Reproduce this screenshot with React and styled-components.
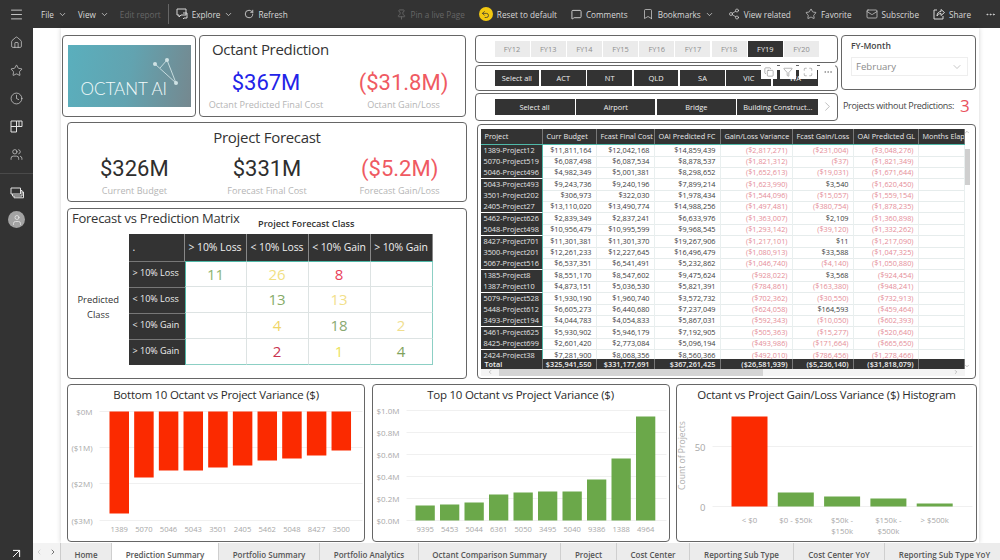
import React from 'react';
import styled, { createGlobalStyle } from 'styled-components';
import {
  Menu, Home, Star, Clock, Users, ChevronDown, ChevronRight, ChevronLeft, ChevronUp, RotateCw, Pin, MessageSquare,
  Bookmark, Share2, Mail, Copy, Filter, Maximize, MoreHorizontal, Undo2, ArrowUpRight, User,
} from 'lucide-react';

const GlobalStyle = createGlobalStyle`
  html, body { margin: 0; padding: 0; background: #fff; }
  body { font-family: "Open Sans", "Noto Sans", sans-serif; color: #333; }
  * { box-sizing: border-box; }
`;

const Shell = styled.div`
  width: 1000px;
  height: 560px;
  display: flex;
  overflow: hidden;
  background: #fff;
`;

const Rail = styled.nav`
  width: 33px;
  flex: none;
  background: #333;
  color: #e4e4e4;
  display: flex;
  flex-direction: column;
  align-items: center;
`;

const RailIcon = styled.div`
  height: 28px;
  display: flex;
  align-items: center;
  justify-content: center;
`;

const RailLine = styled.div`
  width: 100%;
  height: 1px;
  background: #4a4a4a;
  margin: 5px 0;
`;

const Avatar = styled.div`
  width: 17px;
  height: 17px;
  margin-top: 4px;
  border-radius: 50%;
  background: #a3a3a3;
  color: #e8e8e8;
  display: flex;
  align-items: center;
  justify-content: center;
`;

const RailFoot = styled.div`
  margin-top: auto;
  height: 14px;
  display: flex;
  align-items: center;
  color: #fff;
`;

const Main = styled.div`
  flex: 1;
  min-width: 0;
  display: flex;
  flex-direction: column;
`;

const Toolbar = styled.header`
  height: 28px;
  flex: none;
  background: #333;
  color: #d8d8d8;
  font-size: 8.2px;
  display: flex;
  align-items: center;
  justify-content: space-between;
  padding: 0 4px 0 8px;
`;

const ToolGroup = styled.div`
  display: flex;
  align-items: center;
  gap: ${({ $gap }) => $gap}px;
`;

const ToolItem = styled.span`
  display: flex;
  align-items: center;
  gap: 4px;
  white-space: nowrap;
  color: ${({ $dim }) => ($dim ? '#666' : '#d8d8d8')};
`;

const ToolDivider = styled.span`
  width: 1px;
  height: 20px;
  margin: 0 -4px;
  background: #666;
`;

const ResetBadge = styled.span`
  width: 14px;
  height: 14px;
  border-radius: 50%;
  background: #f2c811;
  color: #333;
  display: flex;
  align-items: center;
  justify-content: center;
`;

const Stage = styled.div`
  flex: 1;
  min-height: 0;
  padding-left: 28px;
`;

const Page = styled.main`
  width: 918px;
  height: 515px;
  padding: 7px 0 0 1px;
  background: #fff;
  box-shadow: 0 0 5px rgba(0, 0, 0, 0.18);
  display: flex;
  flex-direction: column;
  gap: 5px;
`;

const TopArea = styled.div`
  display: flex;
  gap: 7px;
  height: 344px;
`;

const LeftColumn = styled.div`
  width: 406px;
  flex: none;
  display: flex;
  flex-direction: column;
`;

const RightColumn = styled.div`
  width: 501px;
  flex: none;
  display: flex;
  flex-direction: column;
`;

const Card = styled.section`
  border: 1.5px solid #666;
  border-radius: 4px;
  background: #fff;
`;

const HeadRow = styled.div`
  display: flex;
  gap: 3px;
  height: 82px;
`;

const LogoCard = styled(Card)`
  width: 134px;
  padding: 8.5px 4.5px;
`;

const Logo = styled.div`
  position: relative;
  width: 123px;
  height: 62px;
  background: linear-gradient(100deg, #5aafbd 0%, #62a3b0 50%, #75888f 100%);
  display: flex;
  align-items: flex-end;
  padding: 0 0 8px 13px;
  color: #f4fbfb;
  font-family: Lato, "Open Sans", sans-serif;
  font-weight: 300;
  font-size: 17px;
  line-height: 20px;
`;

const LogoMark = styled.svg`
  position: absolute;
  left: 0;
  top: 0;
`;

const PredictionCard = styled(Card)`
  width: 267px;
  padding-top: 3px;
`;

const ForecastCard = styled(Card)`
  width: 400px;
  height: 80px;
  margin: 5px 0 0 5px;
  padding-top: 4px;
`;

const KpiTitle = styled.h2`
  margin: 0;
  font-size: 15px;
  letter-spacing: -0.3px;
  line-height: 20px;
  font-weight: 400;
  color: #333;
  text-align: ${({ $center }) => ($center ? 'center' : 'left')};
  padding-left: ${({ $center }) => ($center ? 0 : 12)}px;
`;

const KpiRow = styled.div`
  display: grid;
  grid-template-columns: ${({ $cols }) => $cols};
  column-gap: ${({ $gap }) => $gap || 0}px;
  margin-top: ${({ $top }) => $top}px;
`;

const Kpi = styled.div`
  text-align: center;
`;

const KpiValue = styled.div`
  font-family: Roboto, "Liberation Sans", sans-serif;
  font-size: 22px;
  line-height: 30px;
  color: ${({ $tone }) => ({ blue: '#2323e8', red: '#ef5a62', dark: '#2e2e2e' }[$tone])};
`;

const KpiLabel = styled.div`
  font-size: 9.1px;
  line-height: 14px;
  color: #b5b5b5;
  white-space: nowrap;
`;

const MatrixCard = styled(Card)`
  width: 400px;
  height: 171px;
  margin: 6px 0 0 5px;
  padding: 0 0 0 4px;
`;

const MatrixHead = styled.div`
  display: flex;
  height: 24.5px;
`;

const MatrixTitle = styled.h2`
  margin: 0;
  width: 186px;
  font-size: 13px;
  letter-spacing: -0.25px;
  line-height: 18px;
  font-weight: 400;
  color: #333;
  white-space: nowrap;
`;

const ClassTitle = styled.div`
  font-size: 9.2px;
  font-weight: 600;
  color: #333;
  padding-top: 8px;
  line-height: 13px;
  white-space: nowrap;
`;

const MatrixBody = styled.div`
  display: flex;
`;

const SideLabel = styled.div`
  width: 56.5px;
  flex: none;
  padding: 58px 4px 0 0;
  text-align: center;
  font-size: 9.4px;
  line-height: 15px;
  color: #333;
`;

const MatrixGrid = styled.div`
  display: grid;
  grid-template-columns: 56px repeat(4, 62px);
  grid-template-rows: 27px repeat(4, 26px);
  width: 304px;
`;

const MatrixColHead = styled.div`
  background: #333;
  color: #f0f0f0;
  font-size: 10.4px;
  letter-spacing: -0.05px;
  display: flex;
  align-items: center;
  justify-content: ${({ $left }) => ($left ? 'flex-start' : 'center')};
  padding-left: ${({ $left }) => ($left ? 4 : 0)}px;
  border-right: 1px solid #888;
  white-space: nowrap;
`;

const MatrixRowHead = styled.div`
  background: #333;
  color: #eee;
  font-size: 9px;
  padding: 4px 0 0 4px;
  border-top: 1px solid #777;
  white-space: nowrap;
`;

const MatrixCell = styled.div`
  display: flex;
  align-items: center;
  justify-content: center;
  font-size: 15px;
  color: ${({ $c }) => $c};
  border-right: 1px solid ${({ $end }) => ($end ? '#8ccfc4' : '#dde3e3')};
  border-bottom: 1px solid ${({ $last }) => ($last ? '#8ccfc4' : '#dde3e3')};
  border-left: ${({ $first }) => ($first ? '1px solid #4fb8a8' : '0')};
  border-top: ${({ $top }) => ($top ? '1px solid #4fb8a8' : '0')};
`;

const SlicerCard = styled(Card)`
  width: 363px;
  height: ${({ $h }) => $h}px;
  margin-top: ${({ $top }) => $top || 0}px;
  padding-left: 18.5px;
  display: flex;
  align-items: center;
  gap: ${({ $gap }) => $gap}px;
  position: relative;
`;

const SlicerTop = styled.div`
  display: flex;
  gap: 3px;
`;

const SlicerStack = styled.div`
  width: 363px;
  flex: none;
`;

const SlicerButton = styled.span`
  width: ${({ $w }) => $w}px;
  height: 16px;
  flex: none;
  background: ${({ $dark }) => ($dark ? '#333' : '#ebebeb')};
  color: ${({ $dark }) => ($dark ? '#efefef' : '#8d8d8d')};
  font-size: 7.4px;
  display: flex;
  align-items: center;
  justify-content: center;
  white-space: nowrap;
`;

const VisualHeader = styled.div`
  position: absolute;
  right: 2px;
  top: -2px;
  display: flex;
  align-items: flex-start;
  gap: 3px;
`;

const VisualButton = styled.span`
  width: ${({ $w }) => $w || 16}px;
  height: 15px;
  background: #fff;
  color: #6f6f6f;
  display: flex;
  align-items: center;
  justify-content: center;
`;

const SlicerArrow = styled.span`
  position: absolute;
  right: 2px;
  top: 5px;
  color: #999;
  display: flex;
`;

const SideStack = styled.div`
  flex: 1;
  min-width: 0;
`;

const MonthCard = styled(Card)`
  height: 55px;
  padding: 4px 7px 0 9px;
`;

const MonthLabel = styled.div`
  font-size: 8.6px;
  font-weight: 600;
  line-height: 13px;
  color: #444;
`;

const MonthSelect = styled.div`
  margin-top: 4px;
  height: 19px;
  border: 1px solid #eee;
  padding: 0 4px 0 4px;
  display: flex;
  align-items: center;
  justify-content: space-between;
  color: #8c8c8c;
  font-size: 9.6px;
`;

const MissingLine = styled.div`
  height: 30px;
  padding-left: 2px;
  display: flex;
  align-items: center;
  gap: 6px;
  font-size: 9px;
  letter-spacing: -0.3px;
  color: #444;
  white-space: nowrap;
`;

const MissingCount = styled.span`
  font-size: 17px;
  color: #e9525c;
`;

const TableCard = styled(Card)`
  width: 499px;
  height: 255px;
  margin: 3px 0 0 2px;
  padding: 3.5px 4px 0 2.5px;
  display: flex;
`;

const TableArea = styled.div`
  width: 484px;
  flex: none;
  display: flex;
  flex-direction: column;
`;

const Row = styled.div`
  display: grid;
  grid-template-columns: 62px 54px 58px 66px 72px 61px 65px 46px;
  font-size: 7.3px;
`;

const HeadRowCells = styled(Row)`
  height: 16px;
  background: #333;
  border-bottom: 1px solid #4fb8a8;
`;

const HeadCell = styled.div`
  color: #e8e8e8;
  padding: 2px 0 0 4px;
  line-height: 10px;
  border-right: 1px solid #777;
  white-space: nowrap;
  overflow: hidden;
`;

const TableRows = styled.div`
  height: 214px;
  overflow: hidden;
`;

const BodyRow = styled(Row)`
  height: 11.4px;
  line-height: 11px;
`;

const NameCell = styled.div`
  background: #333;
  color: #e4e4e4;
  padding-left: 3px;
  border-bottom: 1px solid #fff;
  border-right: 1px solid #4fb8a8;
  white-space: nowrap;
`;

const ValueCell = styled.div`
  text-align: right;
  padding-right: 4px;
  white-space: nowrap;
  color: ${({ $neg }) => ($neg ? '#e58d98' : '#3c3c3c')};
  border-bottom: 1px solid #e6ecec;
  border-right: 1px solid #e9efef;
`;

const TotalRow = styled(Row)`
  height: 10px;
  line-height: 10px;
  background: #333;
  color: #f0f0f0;
  font-weight: 600;
`;

const TotalCell = styled.div`
  text-align: ${({ $left }) => ($left ? 'left' : 'right')};
  padding: ${({ $left }) => ($left ? '0 0 0 4px' : '0 4px 0 0')};
  border-right: 1px solid #777;
  white-space: nowrap;
`;

const HScroll = styled.div`
  height: 7px;
  background: #f4f4f4;
  color: #888;
  display: flex;
  align-items: center;
  justify-content: space-between;
  padding: 0 6px;
  position: relative;
`;

const HThumb = styled.div`
  position: absolute;
  left: 18px;
  top: 0;
  bottom: 0;
  width: 264px;
  background: #d4d4d4;
`;

const VScroll = styled.div`
  width: 5px;
  flex: none;
  height: 240px;
  color: #888;
  display: flex;
  flex-direction: column;
  align-items: center;
  justify-content: space-between;
  position: relative;
`;

const VThumb = styled.div`
  position: absolute;
  top: 20px;
  left: 0;
  right: 0;
  height: 36px;
  background: #cfcfcf;
`;

const ChartRow = styled.div`
  display: flex;
  padding-left: 5px;
  gap: 6.5px;
  height: 158px;
`;

const ChartCard = styled(Card)`
  width: ${({ $w }) => $w}px;
  flex: none;
  overflow: hidden;
`;

const ChartTitle = styled.h3`
  margin: 0;
  height: 19px;
  font-size: 11.5px;
  letter-spacing: -0.25px;
  line-height: 19px;
  font-weight: 400;
  color: #2b2b2b;
  text-align: center;
  white-space: nowrap;
`;

const ChartSvg = styled.svg`
  display: block;
  font-family: "Open Sans", sans-serif;
`;

const TabBar = styled.footer`
  height: 17px;
  flex: none;
  display: flex;
  background: #ececec;
  overflow: hidden;
`;

const TabArrows = styled.div`
  width: 28px;
  flex: none;
  background: #f3f3f3;
  display: flex;
  align-items: center;
  justify-content: space-between;
  padding: 0 3px 0 2px;
  color: #333;
  border-right: 1px solid #ccc;
`;

const Tab = styled.span`
  width: ${({ $w }) => $w}px;
  flex: none;
  font-size: 8px;
  font-weight: 600;
  line-height: 23px;
  text-align: center;
  white-space: nowrap;
  color: #555;
  background: ${({ $active }) => ($active ? '#fff' : '#ececec')};
  border-right: 1px solid #cfcfcf;
`;

const AppsIcon = () => (
  <svg width="13" height="13" viewBox="0 0 13 13" fill="none" stroke="currentColor" strokeWidth="1">
    <path d="M1 1h5.500v11H1zM1 6.500h5.500M6.500 1H12v5.500H6.500zM9 1v5.500" />
  </svg>
);

const PeopleIcon = () => <Users size={13} strokeWidth={1.2} />;

const WorkspaceIcon = () => (
  <svg width="14" height="12" viewBox="0 0 14 12" fill="none" stroke="currentColor" strokeWidth="1">
    <path d="M1 1h9.500v6H1zM2.500 7v2H12V3.500h-1.500M4 9v1.800h9.500V5H12" />
  </svg>
);

const ExploreIcon = () => (
  <svg width="12" height="12" viewBox="0 0 12 12" fill="none" stroke="currentColor" strokeWidth="1">
    <path d="M1 1h9v6H5L3 9V7H1zM7 5h4v5H8l-1 1" />
  </svg>
);

const LogoGlyph = () => (
  <LogoMark width="123" height="62" viewBox="0 0 123 62" fill="none" stroke="#cfe2e4" strokeWidth="0.9">
    <path d="M87 19L108 38M99 15L108 38M99 15L92 23" />
    <g fill="#cfe2e4" stroke="none">
      <circle cx="87" cy="19" r="2" />
      <circle cx="99" cy="15" r="2" />
      <circle cx="108" cy="38" r="2" />
    </g>
  </LogoMark>
);

const yearButtons = ['FY12', 'FY13', 'FY14', 'FY15', 'FY16', 'FY17', 'FY18', 'FY19', 'FY20'];
const stateButtons = ['Select all', 'ACT', 'NT', 'QLD', 'SA', 'VIC', 'WA'];
const typeButtons = ['Select all', 'Airport', 'Bridge', 'Building Construct...'];

const matrixHeads = ['> 10% Loss', '< 10% Loss', '< 10% Gain', '> 10% Gain'];
const matrixRows = [
  [['11', '#8fb56f'], ['26', '#f1df83'], ['8', '#e9405a'], null],
  [null, ['13', '#86ab68'], ['13', '#f2e08a'], null],
  [null, ['4', '#efd566'], ['18', '#8aa971'], ['2', '#f0de8e']],
  [null, ['2', '#c9324e'], ['1', '#ece25a'], ['4', '#7fa35c']],
];

const tableHeads = ['Project', 'Curr Budget', 'Fcast Final Cost', 'OAI Predicted FC', 'Gain/Loss Variance', 'Fcast Gain/Loss', 'OAI Predicted GL', 'Months Elapsed'];

const tableRows = [
  ['1389-Project12', '$11,811,164', '$12,042,168', '$14,859,439', '($2,817,271)', '($231,004)', '($3,048,276)'],
  ['5070-Project519', '$6,087,498', '$6,087,534', '$8,878,537', '($1,821,312)', '($37)', '($1,821,349)'],
  ['5046-Project496', '$4,982,349', '$5,001,381', '$8,298,652', '($1,652,613)', '($19,031)', '($1,671,644)'],
  ['5043-Project493', '$9,243,736', '$9,240,196', '$7,899,214', '($1,623,990)', '$3,540', '($1,620,450)'],
  ['3501-Project202', '$306,973', '$322,030', '$1,978,434', '($1,544,096)', '($15,057)', '($1,559,154)'],
  ['2405-Project27', '$13,110,020', '$13,490,774', '$14,988,256', '($1,497,481)', '($380,754)', '($1,878,235)'],
  ['5462-Project626', '$2,839,349', '$2,837,241', '$6,633,976', '($1,363,007)', '$2,109', '($1,360,898)'],
  ['5048-Project498', '$10,956,479', '$10,995,599', '$9,968,545', '($1,293,142)', '($39,120)', '($1,332,262)'],
  ['8427-Project701', '$11,301,381', '$11,301,370', '$19,267,906', '($1,217,101)', '$11', '($1,217,090)'],
  ['3500-Project201', '$12,261,233', '$12,227,645', '$16,496,479', '($1,080,913)', '$33,588', '($1,047,325)'],
  ['5067-Project516', '$6,537,351', '$6,541,491', '$5,232,862', '($1,046,740)', '($4,140)', '($1,050,880)'],
  ['1385-Project8', '$8,551,170', '$8,547,602', '$9,475,624', '($928,022)', '$3,568', '($924,454)'],
  ['1387-Project10', '$4,873,151', '$5,036,530', '$5,821,391', '($784,861)', '($163,380)', '($948,241)'],
  ['5079-Project528', '$1,930,190', '$1,960,740', '$3,572,732', '($702,362)', '($30,550)', '($732,913)'],
  ['5448-Project612', '$6,605,273', '$6,440,680', '$7,237,049', '($624,058)', '$164,593', '($459,464)'],
  ['3493-Project194', '$4,044,783', '$4,054,833', '$5,867,031', '($592,343)', '($10,050)', '($602,393)'],
  ['5461-Project625', '$5,930,902', '$5,946,179', '$7,192,905', '($505,363)', '($15,277)', '($520,640)'],
  ['8425-Project699', '$2,601,420', '$2,773,084', '$5,096,194', '($493,986)', '($171,664)', '($665,650)'],
  ['2424-Project38', '$7,281,900', '$8,068,356', '$8,560,366', '($492,010)', '($786,456)', '($1,278,466)'],
];

const totals = ['Total', '$325,941,550', '$331,177,691', '$367,261,425', '($26,581,939)', '($5,236,140)', '($31,818,079)', ''];

const tabs = [
  ['Home', 51], ['Prediction Summary', 107], ['Portfolio Summary', 101], ['Portfolio Analytics', 99],
  ['Octant Comparison Summary', 142], ['Project', 56], ['Cost Center', 73], ['Reporting Sub Type', 104],
  ['Cost Center YoY', 91], ['Reporting Sub Type YoY', 120],
];

const bottomIds = ['1389', '5070', '5046', '5043', '3501', '2405', '5462', '5048', '8427', '3500'];
const bottomEnds = [514, 478, 471, 471, 468, 466, 461, 459, 456, 451];
const topIds = ['9395', '5453', '5044', '6361', '5050', '3495', '5040', '9386', '1388', '4964'];
const topStarts = [506, 505, 503, 495, 493, 492, 492, 480, 459, 417];

const AxisLine = ({ y, x1, x2 }) => <line x1={x1} x2={x2} y1={y} y2={y} stroke="#f0f0f0" strokeWidth="1" />;

const AxisText = ({ x, y, anchor = 'end', size = 8, children }) => (
  <text x={x} y={y} textAnchor={anchor} fontSize={size} fill="#a8a8a8">{children}</text>
);

const BottomChart = () => (
  <ChartSvg width="295" height="137" viewBox="68.5 404.5 295 137">
    {[412, 448, 484, 521].map((y) => <AxisLine key={y} y={y} x1={100} x2={363} />)}
    {['$0M', '($1M)', '($2M)', '($3M)'].map((t, i) => <AxisText key={t} x={93} y={[415, 451, 487, 524][i]}>{t}</AxisText>)}
    {bottomEnds.map((end, i) => (
      <rect key={bottomIds[i]} x={110 + i * 24.67} y={412} width={19.5} height={end - 412} fill="#fb2a00" />
    ))}
    {bottomIds.map((id, i) => <AxisText key={id} x={119.7 + i * 24.67} y={532} anchor="middle" size={7.6}>{id}</AxisText>)}
  </ChartSvg>
);

const TopChart = () => (
  <ChartSvg width="295" height="137" viewBox="373.5 404.5 295 137">
    {[411, 433, 455, 477, 499, 521].map((y) => <AxisLine key={y} y={y} x1={407} x2={667} />)}
    {['$1.0M', '$0.8M', '$0.6M', '$0.4M', '$0.2M', '$0.0M'].map((t, i) => <AxisText key={t} x={400} y={414 + i * 22}>{t}</AxisText>)}
    {topStarts.map((top, i) => (
      <rect key={topIds[i]} x={416 + i * 24.5} y={top} width={19.3} height={521 - top} fill="#6ba84a" />
    ))}
    {topIds.map((id, i) => <AxisText key={id} x={425.7 + i * 24.5} y={532} anchor="middle" size={7.6}>{id}</AxisText>)}
  </ChartSvg>
);

const histBars = [
  { top: 417, fill: '#fb2a00', lines: ['< $0'] },
  { top: 493, fill: '#6ba84a', lines: ['$0 - $50k'] },
  { top: 497, fill: '#6ba84a', lines: ['$50k -', '$150k'] },
  { top: 499, fill: '#6ba84a', lines: ['$150k -', '$500k'] },
  { top: 504, fill: '#6ba84a', lines: ['> $500k'] },
];

const Histogram = () => (
  <ChartSvg width="298" height="137" viewBox="677.5 404.5 298 137">
    <AxisLine y={447} x1={713} x2={973} />
    <AxisLine y={507} x1={713} x2={973} />
    <AxisText x={706} y={451} size={9.5}>50</AxisText>
    <AxisText x={706} y={511} size={9.5}>0</AxisText>
    <text x={688} y={459} transform="rotate(-90 685 459)" textAnchor="middle" fontSize="8.6" fill="#b0b0b0">Count of Projects</text>
    {histBars.map((bar, i) => (
      <g key={bar.lines[0]}>
        <rect x={732 + i * 46.3} y={bar.top} width={36} height={507 - bar.top} fill={bar.fill} />
        {bar.lines.map((line, n) => (
          <AxisText key={line} x={750 + i * 46.3} y={523 + n * 11} anchor="middle" size={7.8}>{line}</AxisText>
        ))}
      </g>
    ))}
  </ChartSvg>
);

const isNeg = (v) => v.startsWith('(');

export default function App() {
  return (
    <Shell>
      <GlobalStyle />
      <Rail>
        <RailIcon><Menu size={15} strokeWidth={1.3} /></RailIcon>
        <RailIcon><Home size={13} strokeWidth={1.2} /></RailIcon>
        <RailIcon><Star size={13} strokeWidth={1.2} /></RailIcon>
        <RailIcon><Clock size={13} strokeWidth={1.2} /></RailIcon>
        <RailIcon><AppsIcon /></RailIcon>
        <RailIcon><PeopleIcon /></RailIcon>
        <RailLine />
        <RailIcon><WorkspaceIcon /></RailIcon>
        <Avatar><User size={12} strokeWidth={1.6} /></Avatar>
        <RailFoot><ArrowUpRight size={15} strokeWidth={1.6} /></RailFoot>
      </Rail>
      <Main>
        <Toolbar>
          <ToolGroup $gap={11}>
            <ToolItem>File <ChevronDown size={9} /></ToolItem>
            <ToolItem>View <ChevronDown size={9} /></ToolItem>
            <ToolItem $dim>Edit report</ToolItem>
            <ToolDivider />
            <ToolItem><ExploreIcon /> Explore <ChevronDown size={9} /></ToolItem>
            <ToolItem><RotateCw size={10} /> Refresh</ToolItem>
          </ToolGroup>
          <ToolGroup $gap={14}>
            <ToolItem $dim><Pin size={11} /> Pin a live Page</ToolItem>
            <ToolItem><ResetBadge><Undo2 size={9} /></ResetBadge> Reset to default</ToolItem>
            <ToolItem><MessageSquare size={11} /> Comments</ToolItem>
            <ToolItem><Bookmark size={12} strokeWidth={1.4} /> Bookmarks <ChevronDown size={9} /></ToolItem>
            <ToolItem><Share2 size={12} strokeWidth={1.4} /> View related</ToolItem>
            <ToolItem><Star size={12} strokeWidth={1.4} /> Favorite</ToolItem>
            <ToolItem><Mail size={12} strokeWidth={1.4} /> Subscribe</ToolItem>
            <ToolItem>
              <svg width="12" height="12" viewBox="0 0 12 12" fill="none" stroke="currentColor" strokeWidth="1">
                <path d="M4 2H1v9h9V8M4 8c0-3 2-4.500 4-4.500V1.500L11.500 4.500 8 7.500V5.500C6 5.500 5 6.500 4 8z" />
              </svg>
              Share
            </ToolItem>
            <MoreHorizontal size={11} />
          </ToolGroup>
        </Toolbar>
        <Stage>
          <Page>
            <TopArea>
              <LeftColumn>
                <HeadRow>
                  <LogoCard>
                    <Logo>
                      <LogoGlyph />
                      OCTANT AI
                    </Logo>
                  </LogoCard>
                  <PredictionCard>
                    <KpiTitle>Octant Prediction</KpiTitle>
                    <KpiRow $cols="132px 1fr" $gap={10} $top={9}>
                      <Kpi>
                        <KpiValue $tone="blue">$367M</KpiValue>
                        <KpiLabel>Octant Predicted Final Cost</KpiLabel>
                      </Kpi>
                      <Kpi>
                        <KpiValue $tone="red">($31.8M)</KpiValue>
                        <KpiLabel>Octant Gain/Loss</KpiLabel>
                      </Kpi>
                    </KpiRow>
                  </PredictionCard>
                </HeadRow>
                <ForecastCard>
                  <KpiTitle $center>Project Forecast</KpiTitle>
                  <KpiRow $cols="repeat(3, 1fr)" $top={7}>
                    <Kpi>
                      <KpiValue $tone="dark">$326M</KpiValue>
                      <KpiLabel>Current Budget</KpiLabel>
                    </Kpi>
                    <Kpi>
                      <KpiValue $tone="dark">$331M</KpiValue>
                      <KpiLabel>Forecast Final Cost</KpiLabel>
                    </Kpi>
                    <Kpi>
                      <KpiValue $tone="red">($5.2M)</KpiValue>
                      <KpiLabel>Forecast Gain/Loss</KpiLabel>
                    </Kpi>
                  </KpiRow>
                </ForecastCard>
                <MatrixCard>
                  <MatrixHead>
                    <MatrixTitle>Forecast vs Prediction Matrix</MatrixTitle>
                    <ClassTitle>Project Forecast Class</ClassTitle>
                  </MatrixHead>
                  <MatrixBody>
                    <SideLabel>Predicted Class</SideLabel>
                    <MatrixGrid>
                      <MatrixColHead $left>.</MatrixColHead>
                      {matrixHeads.map((h) => <MatrixColHead key={h}>{h}</MatrixColHead>)}
                      {matrixRows.map((row, r) => (
                        <React.Fragment key={matrixHeads[r]}>
                          <MatrixRowHead>{matrixHeads[r]}</MatrixRowHead>
                          {row.map((cell, c) => (
                            <MatrixCell
                              key={c}
                              $c={cell ? cell[1] : '#333'}
                              $first={c === 0}
                              $top={r === 0}
                              $end={c === 3}
                              $last={r === 3}
                            >
                              {cell ? cell[0] : ''}
                            </MatrixCell>
                          ))}
                        </React.Fragment>
                      ))}
                    </MatrixGrid>
                  </MatrixBody>
                </MatrixCard>
              </LeftColumn>
              <RightColumn>
                <SlicerTop>
                  <SlicerStack>
                    <SlicerCard $h={28} $gap={1.2}>
                      {yearButtons.map((y) => <SlicerButton key={y} $w={35} $dark={y === 'FY19'}>{y}</SlicerButton>)}
                    </SlicerCard>
                    <SlicerCard $h={26} $top={2} $gap={1.6}>
                      {stateButtons.map((s) => <SlicerButton key={s} $w={44.8} $dark>{s}</SlicerButton>)}
                      <VisualHeader>
                        <VisualButton><Copy size={10} strokeWidth={1.2} /></VisualButton>
                        <VisualButton><Filter size={10} strokeWidth={1.2} /></VisualButton>
                        <VisualButton $w={18}><Maximize size={10} strokeWidth={1.2} /></VisualButton>
                        <VisualButton $w={15}><MoreHorizontal size={10} strokeWidth={1.4} /></VisualButton>
                      </VisualHeader>
                    </SlicerCard>
                    <SlicerCard $h={28} $top={2} $gap={1.8}>
                      {typeButtons.map((t, i) => <SlicerButton key={t} $w={[80, 79, 78.5, 81][i]} $dark>{t}</SlicerButton>)}
                      <SlicerArrow><ChevronRight size={15} strokeWidth={1} /></SlicerArrow>
                    </SlicerCard>
                  </SlicerStack>
                  <SideStack>
                    <MonthCard>
                      <MonthLabel>FY-Month</MonthLabel>
                      <MonthSelect>
                        February
                        <ChevronDown size={12} strokeWidth={1} />
                      </MonthSelect>
                    </MonthCard>
                    <MissingLine>
                      Projects without Predictions:
                      <MissingCount>3</MissingCount>
                    </MissingLine>
                  </SideStack>
                </SlicerTop>
                <TableCard>
                  <TableArea>
                    <HeadRowCells>
                      {tableHeads.map((h) => <HeadCell key={h}>{h}</HeadCell>)}
                    </HeadRowCells>
                    <TableRows>
                      {tableRows.map((row) => (
                        <BodyRow key={row[0]}>
                          <NameCell>{row[0]}</NameCell>
                          {row.slice(1).map((v, i) => <ValueCell key={i} $neg={isNeg(v)}>{v}</ValueCell>)}
                          <ValueCell />
                        </BodyRow>
                      ))}
                    </TableRows>
                    <TotalRow>
                      {totals.map((v, i) => <TotalCell key={i} $left={i === 0}>{v}</TotalCell>)}
                    </TotalRow>
                    <HScroll>
                      <HThumb />
                      <ChevronLeft size={6} />
                      <ChevronRight size={6} />
                    </HScroll>
                  </TableArea>
                  <VScroll>
                    <VThumb />
                    <ChevronUp size={6} />
                    <ChevronDown size={6} />
                  </VScroll>
                </TableCard>
              </RightColumn>
            </TopArea>
            <ChartRow>
              <ChartCard $w={298}>
                <ChartTitle>Bottom 10 Octant vs Project Variance ($)</ChartTitle>
                <BottomChart />
              </ChartCard>
              <ChartCard $w={298}>
                <ChartTitle>Top 10 Octant vs Project Variance ($)</ChartTitle>
                <TopChart />
              </ChartCard>
              <ChartCard $w={301}>
                <ChartTitle>Octant vs Project Gain/Loss Variance ($) Histogram</ChartTitle>
                <Histogram />
              </ChartCard>
            </ChartRow>
          </Page>
        </Stage>
        <TabBar>
          <TabArrows>
            <ChevronLeft size={8} color="#bbb" />
            <ChevronRight size={8} />
          </TabArrows>
          {tabs.map(([name, w], i) => <Tab key={name} $w={w} $active={i === 1}>{name}</Tab>)}
        </TabBar>
      </Main>
    </Shell>
  );
}
